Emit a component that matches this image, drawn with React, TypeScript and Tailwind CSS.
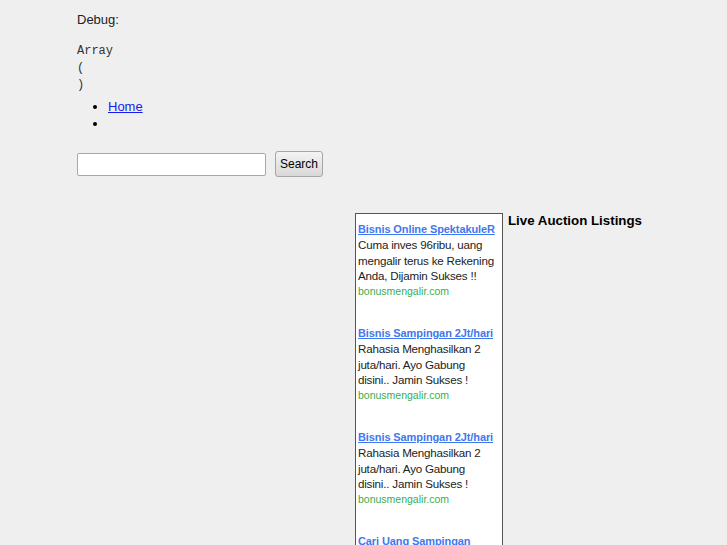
import React from 'react';

const ads = [
  {
    title: 'Bisnis Online SpektakuleR',
    desc: 'Cuma inves 96ribu, uang mengalir terus ke Rekening Anda, Dijamin Sukses !!',
    url: 'bonusmengalir.com',
  },
  {
    title: 'Bisnis Sampingan 2Jt/hari',
    desc: 'Rahasia Menghasilkan 2 juta/hari. Ayo Gabung disini.. Jamin Sukses !',
    url: 'bonusmengalir.com',
  },
  {
    title: 'Bisnis Sampingan 2Jt/hari',
    desc: 'Rahasia Menghasilkan 2 juta/hari. Ayo Gabung disini.. Jamin Sukses !',
    url: 'bonusmengalir.com',
  },
  {
    title: 'Cari Uang Sampingan',
    desc: 'Dapatkan penghasilan tambahan dari rumah. Gratis daftar !',
    url: 'bonusmengalir.com',
  },
];

const App = () => {
  return (
    <div className="h-[545px] overflow-hidden bg-[#efefef] font-['Liberation_Sans',Arial,sans-serif] text-[13px] text-[#222]">
      <div className="pl-[77px] pt-[12px]">
        <p className="leading-[16px]">Debug:</p>

        <pre className="mt-[15px] font-['Liberation_Mono','Courier_New',monospace] text-[12px] leading-[17px] text-[#333]">
          {'Array\n(\n)'}
        </pre>

        <ul className="mt-[4px] list-disc pl-[31px] leading-[17px] text-black">
          <li>
            <a href="#" className="text-[#1a1aee] underline">Home</a>
          </li>
          <li>&nbsp;</li>
        </ul>

        {/* search form */}
        <div className="mt-[19px] flex items-center gap-[9px]">
          <input
            type="text"
            className="h-[23px] w-[189px] border border-[#a8a8a8] bg-white rounded-[2px]"
          />
          <button className="h-[26px] w-[48px] border border-[#a6a6a6] rounded-[3px] bg-gradient-to-b from-[#f4f4f4] to-[#d8d8d8] text-[12px] text-black">
            Search
          </button>
        </div>

        <div className="mt-[36px] flex items-start">
          <div className="ml-[278px] w-[148px] h-[400px] border border-[#555] bg-white pl-[2px] pr-[6px] pt-[8px]">
            {ads.map((ad, i) => (
              <div key={i} className="h-[104px]">
                <a href="#" className="block text-[11px] font-bold leading-[15px] text-[#3f77ee] underline whitespace-nowrap tracking-[-0.1px]">
                  {ad.title}
                </a>
                <p className="text-[11.6px] leading-[15.5px] text-[#222] tracking-[-0.2px]">{ad.desc}</p>
                <p className="text-[10.5px] leading-[15px] text-[#3aad4e]">{ad.url}</p>
              </div>
            ))}
          </div>
          <h2 className="ml-[5px] text-[13.3px] font-bold leading-[16px] text-black">
            Live Auction Listings
          </h2>
        </div>
      </div>
    </div>
  );
};

export default App;
